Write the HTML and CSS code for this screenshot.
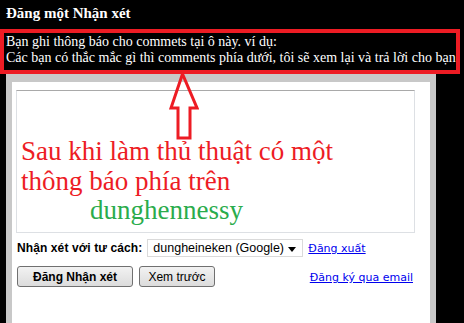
FILE: index.html
```html
<!DOCTYPE html>
<html>
<head>
<meta charset="utf-8">
<link rel="stylesheet" href="styles.css">
</head>
<body>
<h3 class="title">Đăng một Nhận xét</h3>
<div class="notice">
  <div>Bạn ghi thông báo cho commets tại ô này. ví dụ:</div>
  <div>Các bạn có thắc mắc gì thì comments phía dưới, tôi sẽ xem lại và trả lời cho bạn</div>
</div>
<div class="panel">
  <div class="editor">
    <div class="big red">Sau khi làm thủ thuật có một<br>thông báo phía trên</div>
    <div class="big green">dunghennessy</div>
  </div>
  <div class="identity">
    <span class="label">Nhận xét với tư cách:</span>
    <span class="select">dungheineken (Google)<span class="caret"></span></span>
    <a class="link" href="#">Đăng xuất</a>
  </div>
  <div class="actions">
    <span class="btn bold">Đăng Nhận xét</span>
    <span class="btn preview">Xem trước</span>
    <a class="link subscribe" href="#">Đăng ký qua email</a>
  </div>
</div>
<svg class="arrow" width="30" height="70" viewBox="0 0 30 70">
  <path d="M13.5 2 L2 36 L9 36 L9 66 L21 66 L21 36 L28 36 Z" fill="none" stroke="#ed1c24" stroke-width="3" stroke-linejoin="miter"/>
</svg>
</body>
</html>
```
FILE: styles.css
```css
html, body {
  margin: 0;
  padding: 0;
  background: #000;
  height: 323px;
  overflow: hidden;
}
body {
  position: relative;
  font-family: "Liberation Serif", serif;
}
.title {
  margin: 0;
  height: 29px;
  box-sizing: border-box;
  padding: 4px 6px 0;
  color: #fff;
  font-size: 15px;
  font-weight: bold;
  line-height: 18px;
}
.notice {
  width: 460px;
  height: 45px;
  box-sizing: border-box;
  border: 4px solid #ed1c24;
  padding: 1px 2px 0;
  color: #fff;
  font-size: 14px;
  line-height: 16px;
  white-space: nowrap;
  overflow: hidden;
}
.panel {
  margin-left: 6px;
  width: 430px;
  height: 260px;
  box-sizing: border-box;
  background: #fff;
  border-style: solid;
  border-color: #c8c8c8;
  border-width: 8px 6px 6px;
  padding: 8px 15px 0 4px;
  font-family: "Liberation Sans", sans-serif;
  font-size: 12px;
}
.editor {
  height: 143px;
  box-sizing: border-box;
  border: 1px solid #dde0e4;
  border-top-color: #a9a9a9;
  padding: 45px 0 0 4px;
  font-family: "Liberation Serif", serif;
}
.big {
  font-size: 27px;
  line-height: 30px;
}
.red { color: #ed1c24; }
.green {
  color: #2aac4c;
  padding-left: 69px;
  line-height: 28px;
}
.identity {
  display: flex;
  align-items: center;
  margin-top: 6px;
  height: 18px;
}
.label {
  font-weight: bold;
  color: #000;
  margin-left: 1px;
  letter-spacing: 0.1px;
}
.select {
  margin-left: 5px;
  width: 156px;
  height: 18px;
  box-sizing: border-box;
  border: 1px solid #dadada;
  padding: 1px 0 0 5px;
  font-size: 12.5px;
  position: relative;
}
.caret {
  position: absolute;
  right: 6px;
  top: 7px;
  border-left: 4px solid transparent;
  border-right: 4px solid transparent;
  border-top: 5px solid #000;
}
.link {
  color: #0000ee;
  text-decoration: underline;
  font-family: "DejaVu Sans", sans-serif;
  font-size: 11px;
}
.identity .link { margin-left: 5px; }
.actions {
  display: flex;
  align-items: center;
  margin-top: 9px;
}
.btn {
  display: inline-flex;
  align-items: center;
  justify-content: center;
  height: 21px;
  box-sizing: border-box;
  border: 1px solid #707070;
  border-radius: 3px;
  background: linear-gradient(#f2f2f2, #dcdcdc);
  margin-left: 1px;
  font-size: 12px;
  color: #000;
  white-space: nowrap;
}
.btn.bold {
  font-weight: bold;
  width: 116px;
}
.btn.preview {
  margin-left: 6px;
  width: 76px;
}
.subscribe { margin-left: auto; margin-right: 2px; position: relative; top: 1px; }
.arrow {
  position: absolute;
  left: 169px;
  top: 72px;
}
```
